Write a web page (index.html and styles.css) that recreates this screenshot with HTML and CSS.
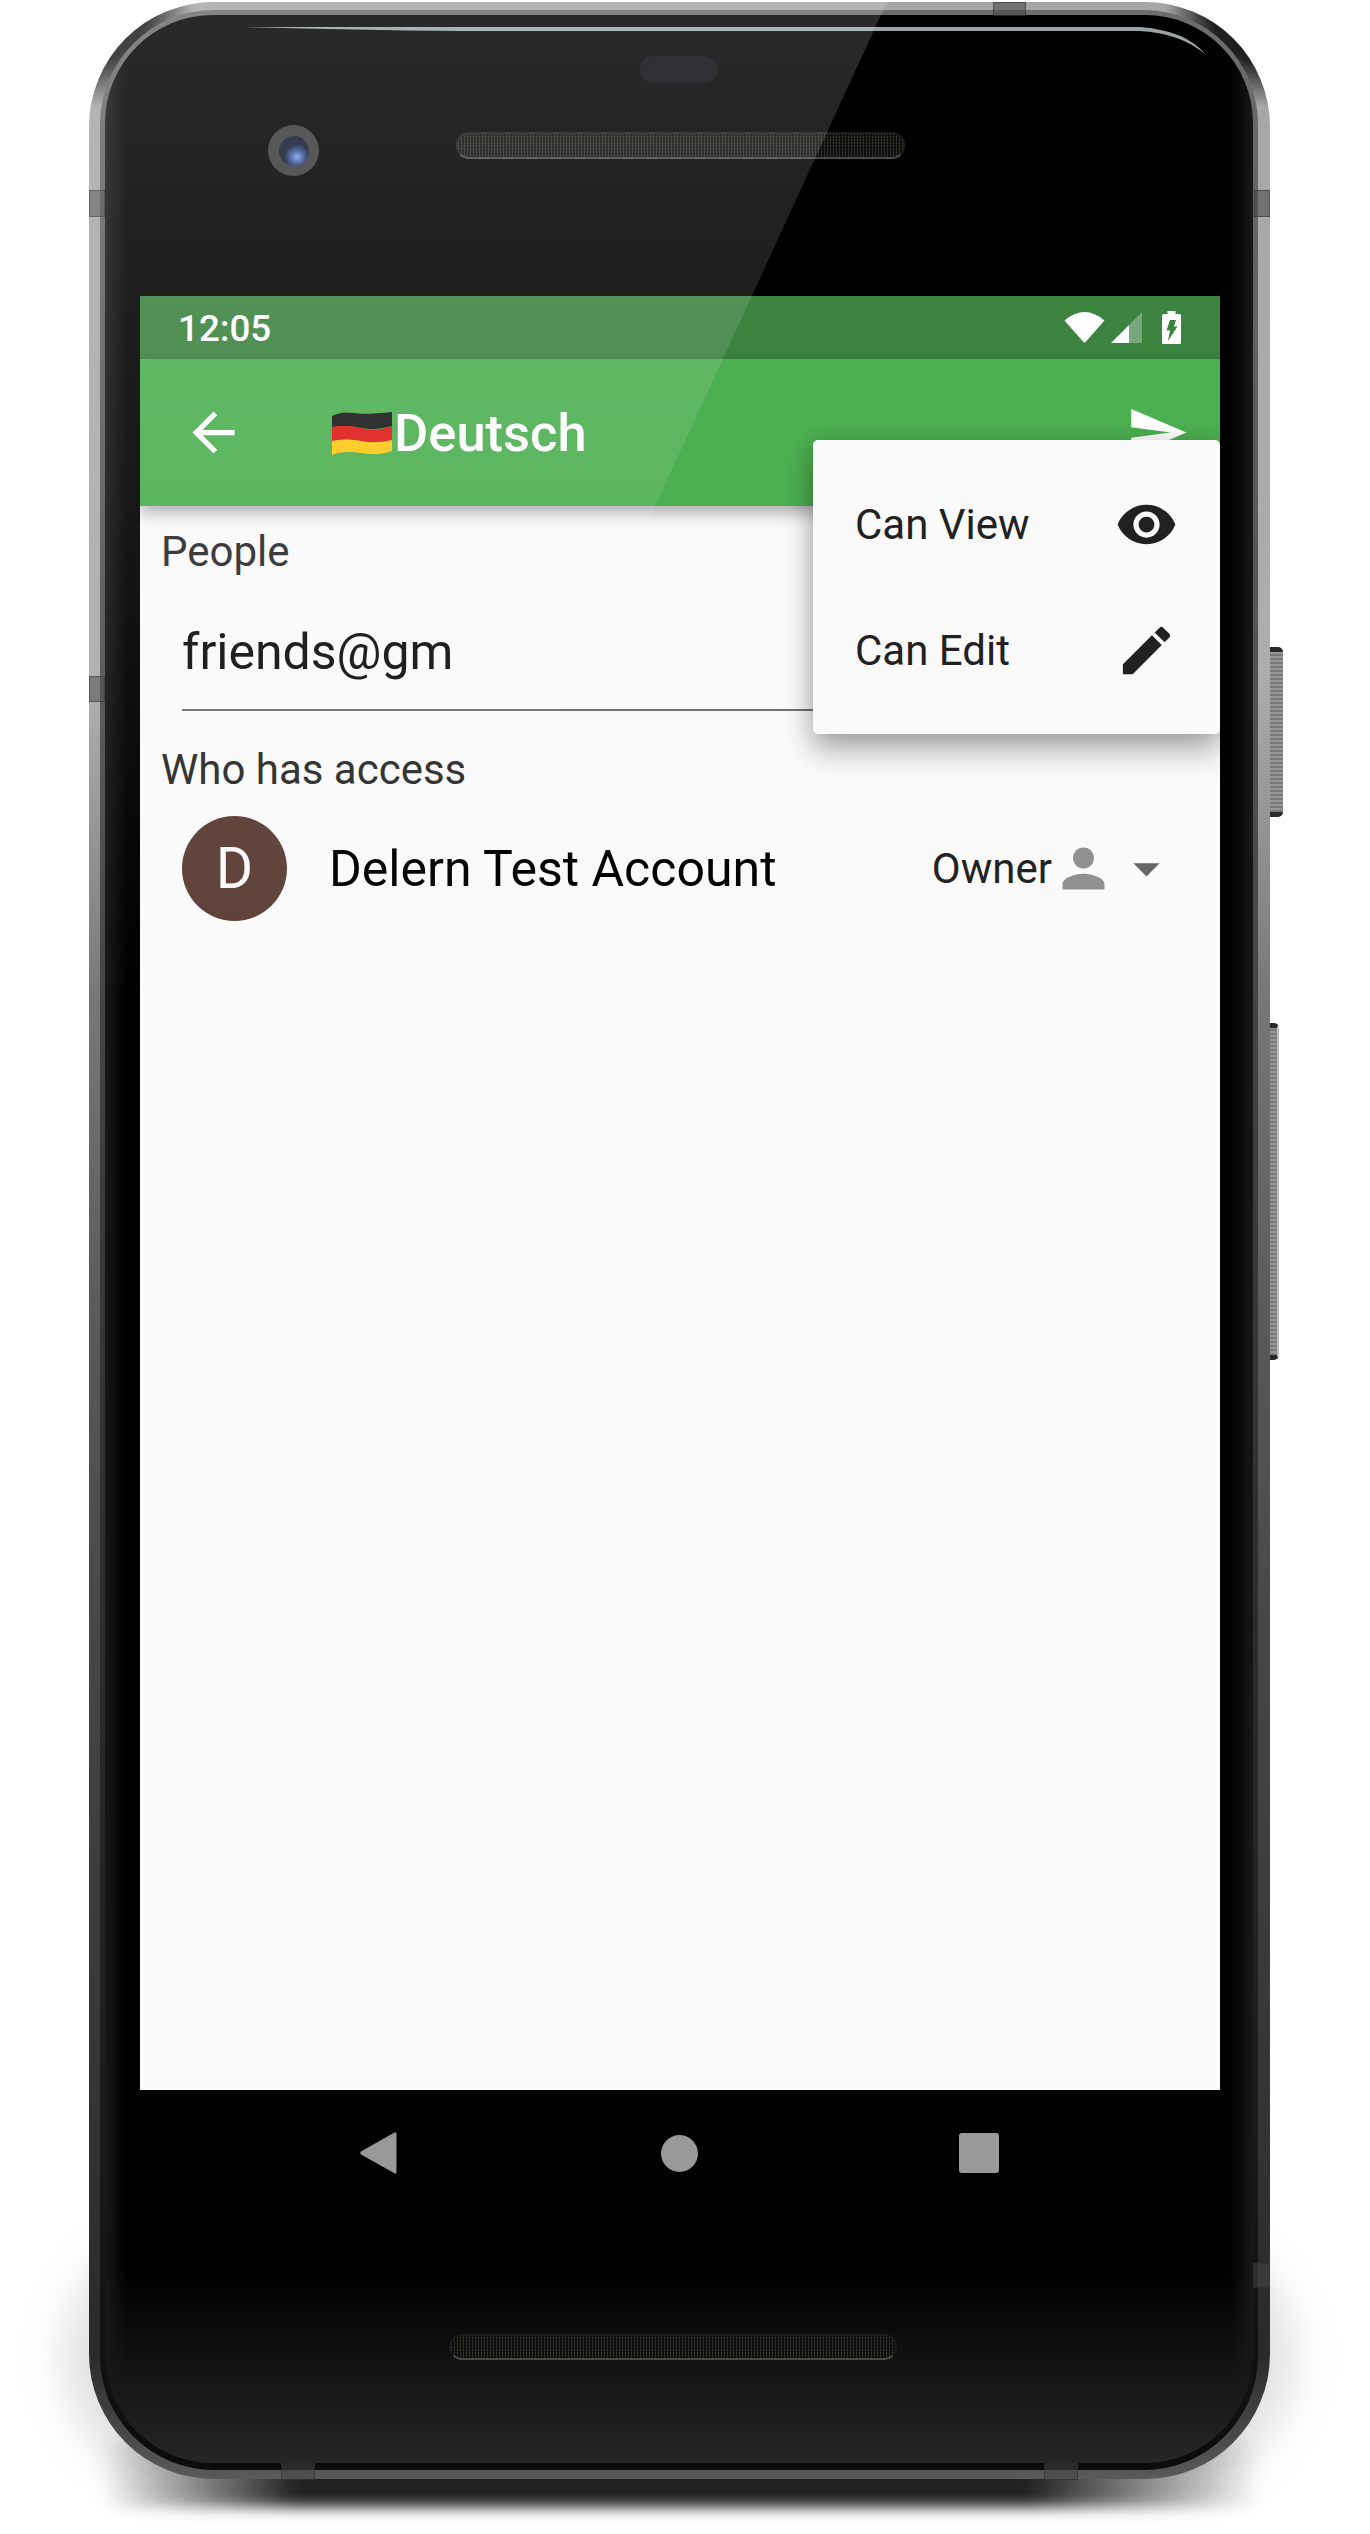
FILE: index.html
```html
<!DOCTYPE html>
<html lang="en">
<head>
    <meta charset="UTF-8">
    <meta name="viewport" content="width=device-width, initial-scale=1.0">
    <title>Deutsch - Share</title>
    <link rel="stylesheet" href="styles.css">
</head>
<body>
    <div class="ground-wide"></div>
    <div class="ground-core"></div>

    <div class="device">
        <div class="phone">
            <div class="rim">
                <div class="bezel">
                    <div class="bezel-top">
                        <div class="sensor"></div>
                        <div class="camera-row">
                            <div class="camera"><div class="lens"></div></div>
                            <div class="speaker speaker-top"></div>
                        </div>
                    </div>

                    <div class="screen">
                        <div class="status-bar">
                            <span class="clock">12:05</span>
                            <div class="status-icons">
                                <svg class="icon-wifi" viewBox="0 0 41 31"><path d="M.5 8.5Q20.5-8.5 40.5 8.5L22 29.5Q20.5 31.5 19 29.5Z" fill="#fff"/></svg>
                                <svg class="icon-signal" viewBox="0 0 31 31">
                                    <path d="M0 31L18 13V31Z" fill="#fff"/>
                                    <path d="M18 13L31 0V31H18Z" fill="#fff" opacity=".3"/>
                                </svg>
                                <svg class="icon-battery" viewBox="0 0 19 33">
                                    <path d="M5.5 0H13.5V3H17.5Q19 3 19 4.5V31.5Q19 33 17.5 33H1.5Q0 33 0 31.5V4.5Q0 3 1.5 3H5.5Z" fill="#fff"/>
                                    <path d="M8 9H14L12 15.5H15.5L6 30L8 19.5H4.5Z" fill="#3b833f"/>
                                </svg>
                            </div>
                        </div>

                        <div class="app-bar">
                            <svg class="icon-lg back-icon" viewBox="0 0 24 24"><path d="M20 11H7.83l5.59-5.59L12 4l-8 8 8 8 1.41-1.41L7.83 13H20v-2z" fill="#fff"/></svg>
                            <svg class="flag" viewBox="0 0 62 44">
                                <path d="M1 5Q10 0 22 2T61 1V15Q45 20 30 17T1 16Z" fill="#1a1a1a"/>
                                <path d="M1 16Q15 13 30 17T61 15V30Q45 33 30 30T1 30Z" fill="#dc1a17"/>
                                <path d="M1 30Q15 27 30 30T61 29V40Q48 45 30 42T1 44Z" fill="#fdc816"/>
                            </svg>
                            <span class="title">Deutsch</span>
                            <svg class="icon-lg send-icon" viewBox="0 0 24 24"><path d="M2.01 21L23 12 2.01 3 2 10l15 2-15 2z" fill="#fff"/></svg>
                        </div>

                        <div class="content">
                            <div class="label label-people">People</div>
                            <div class="people-input">friends@gm</div>
                            <div class="label label-access">Who has access</div>
                            <div class="user-row">
                                <div class="avatar">D</div>
                                <div class="user-name">Delern Test Account</div>
                                <div class="user-role">
                                    <span class="role-text">Owner</span>
                                    <svg class="icon-lg" viewBox="0 0 24 24"><path d="M12 12c2.21 0 4-1.79 4-4s-1.79-4-4-4-4 1.79-4 4 1.79 4 4 4zm0 2c-2.67 0-8 1.34-8 4v2h16v-2c0-2.66-5.33-4-8-4z" fill="#919191"/></svg>
                                    <svg class="icon-lg" viewBox="0 0 24 24"><path d="M7 10l5 5 5-5z" fill="#666"/></svg>
                                </div>
                            </div>
                        </div>

                        <div class="menu">
                            <div class="menu-item">
                                <span>Can View</span>
                                <svg class="icon-lg" viewBox="0 0 24 24"><path d="M12 4.5C7 4.5 2.73 7.61 1 12c1.73 4.39 6 7.5 11 7.5s9.27-3.11 11-7.5c-1.73-4.39-6-7.5-11-7.5zM12 17c-2.76 0-5-2.24-5-5s2.24-5 5-5 5 2.24 5 5-2.24 5-5 5zm0-8c-1.66 0-3 1.34-3 3s1.34 3 3 3 3-1.34 3-3-1.34-3-3-3z" fill="#212121"/></svg>
                            </div>
                            <div class="menu-item">
                                <span>Can Edit</span>
                                <svg class="icon-lg" viewBox="0 0 24 24"><path d="M3 17.25V21h3.75L17.81 9.94l-3.75-3.75L3 17.25zM20.71 7.04c.39-.39.39-1.02 0-1.41l-2.34-2.34c-.39-.39-1.02-.39-1.41 0l-1.83 1.83 3.75 3.75 1.83-1.83z" fill="#212121"/></svg>
                            </div>
                        </div>
                    </div>

                    <div class="nav-bar">
                        <svg class="nav-back" viewBox="0 0 37 42"><path d="M1 19.500L34 .8Q36.500-.5 36.500 2V40Q36.500 42.500 34 41L1 22.500Q-.5 21 1 19.500Z" fill="#999"/></svg>
                        <div class="nav-home"></div>
                        <div class="nav-recent"></div>
                    </div>
                    <div class="speaker speaker-bottom"></div>
                </div>
            </div>

            <!-- seams and glass reflections lie over the body -->
            <div class="seam seam-left"></div>
            <div class="seam seam-left-mid"></div>
            <div class="seam seam-right"></div>
            <div class="seam seam-right-low"></div>
            <div class="seam seam-top"></div>
            <div class="seam seam-bottom-a"></div>
            <div class="seam seam-bottom-b"></div>
            <svg class="glass-line" viewBox="0 0 1181 80"><path d="M158 25H1050Q1097 28 1117 53Q1092 31 1050 29H373Q260 28 158 25Z" fill="#9aa5a6"/></svg>
            <div class="gloss"></div>
        </div>

        <div class="side-keys">
            <div class="key key-power"></div>
            <div class="key key-volume"></div>
        </div>
    </div>
</body>
</html>
```

FILE: styles.css
```css
html, body {
    height: 2534px;
}
body {
    font-family: Roboto, "Liberation Sans", sans-serif;
    margin: 0;
    padding: 2px 0 0 89px;
    box-sizing: border-box;
    background-color: #fff;
    overflow: hidden;
    position: relative;
}

/* shadow the phone throws on the ground */
.ground-wide {
    position: absolute;
    left: 66px;
    top: 2230px;
    width: 1226px;
    height: 255px;
    border-radius: 130px;
    background-color: rgba(0, 0, 0, 0.13);
    filter: blur(24px);
}
.ground-core {
    position: absolute;
    left: 100px;
    top: 2440px;
    width: 1160px;
    height: 67px;
    background: linear-gradient(90deg, rgba(34, 34, 34, 0) 0, #222 17%, #222 80%, rgba(34, 34, 34, 0) 100%);
    filter: blur(7px);
}

.device {
    display: flex;
    position: relative;
    width: 1200px;
}
.phone {
    position: relative;
    width: 1181px;
    height: 2477px;
    flex-shrink: 0;
    box-sizing: border-box;
    padding: 8px 12px 9px 11px;
    border-radius: 125px;
    background:
        radial-gradient(circle 105px at 0 0, #1f1f1f 58%, rgba(30, 30, 30, 0) 100%),
        radial-gradient(circle 105px at 100% 0, #1f1f1f 58%, rgba(30, 30, 30, 0) 100%),
        linear-gradient(180deg, #a6a6a6 0, #adadad 27%, #787878 40%, #5a5a5a 53%, #484848 65%, #383838 81%, #2a2a2a 95%, #5a5a5a 100%);
}
.rim {
    height: 100%;
    box-sizing: border-box;
    padding: 5px 5px 7px 5px;
    border-radius: 114px;
    background: linear-gradient(180deg, #6d6d6d 0, #555 25%, #3a3a3a 50%, #1c1c1c 85%, #0c0c0c 100%);
}
.bezel {
    height: 100%;
    border-radius: 108px;
    overflow: hidden;
    background:
        linear-gradient(90deg, #181818 0, rgba(0, 0, 0, 0) 22px, rgba(0, 0, 0, 0) 1125px, #181818 100%),
        linear-gradient(180deg, #000 0, #000 92.2%, #1c1c1c 98%, #262626 100%);
}

.bezel-top {
    height: 281px;
    box-sizing: border-box;
    padding-top: 41px;
}
.sensor {
    width: 77px;
    height: 27px;
    margin-left: 535px;
    border-radius: 13px;
    background-color: #0a0b10;
}
.camera-row {
    display: flex;
    align-items: flex-start;
    margin-top: 42px;
    padding-left: 163px;
}
.camera {
    display: flex;
    align-items: center;
    justify-content: center;
    width: 51px;
    height: 51px;
    border-radius: 50%;
    background-color: #3c3c3c;
}
.lens {
    width: 30px;
    height: 30px;
    border-radius: 50%;
    background: radial-gradient(circle 15px at 60% 70%, #7fa5ea 0, #3b5aa0 40%, #141b33 85%);
}
.speaker {
    box-sizing: border-box;
    width: 449px;
    height: 27px;
    border: 2px solid #1c1c1c;
    border-bottom-color: #4a4a4a;
    border-radius: 13px;
    background:
        repeating-linear-gradient(0deg, rgba(0, 0, 0, 0.4) 0, rgba(0, 0, 0, 0.4) 1px, rgba(0, 0, 0, 0) 1px, rgba(0, 0, 0, 0) 3px),
        repeating-linear-gradient(90deg, #36362f 0, #36362f 1px, #111110 1px, #111110 3px);
}
.speaker-top {
    margin: 7px 0 0 137px;
}
.speaker-bottom {
    width: 448px;
    height: 26px;
    margin: 0 0 0 344px;
}

.screen {
    position: relative;
    width: 1080px;
    height: 1794px;
    margin-left: 35px;
    overflow: hidden;
    background-color: #fafafa;
}
.status-bar {
    display: flex;
    align-items: center;
    justify-content: space-between;
    height: 63px;
    box-sizing: border-box;
    padding: 0 39px 0 38px;
    background-color: #3b833f;
}
.clock {
    padding-top: 2px;
    color: #fff;
    font-size: 36.75px;
    font-weight: 500;
}
.status-icons {
    display: flex;
    align-items: center;
    gap: 6px;
}
.icon-wifi {
    width: 41px;
    height: 31px;
}
.icon-signal {
    width: 31px;
    height: 31px;
}
.icon-battery {
    width: 19px;
    height: 33px;
    margin-left: 14px;
}

.icon-lg {
    display: block;
    width: 63px;
    height: 63px;
    flex-shrink: 0;
}
.app-bar {
    position: relative;
    display: flex;
    align-items: center;
    height: 147px;
    padding: 0 31.500px 0 42px;
    background-color: #4caf50;
    box-shadow: 0 6px 16px rgba(0, 0, 0, 0.35);
}
.flag {
    width: 62px;
    height: 44px;
    margin-left: 86px;
    flex-shrink: 0;
}
.title {
    margin-left: 1px;
    color: #fff;
    font-size: 52.5px;
    font-weight: 500;
}
.send-icon {
    margin-left: auto;
}

.content {
    padding: 0 21px;
}
.label {
    color: #2c2c2c;
    font-size: 42px;
    line-height: 50px;
}
.label-people {
    padding-top: 21px;
}
.people-input {
    height: 134px;
    box-sizing: border-box;
    width: 880px;
    margin-left: 21px;
    padding-top: 45px;
    border-bottom: 2px solid #707070;
    color: #111;
    font-size: 50px;
    line-height: 60px;
}
.label-access {
    margin-top: 34px;
}
.user-row {
    display: flex;
    align-items: center;
    height: 105px;
    margin-top: 21px;
    padding-left: 21px;
}
.avatar {
    display: flex;
    align-items: center;
    justify-content: center;
    width: 105px;
    height: 105px;
    flex-shrink: 0;
    border-radius: 50%;
    background-color: #5d4037;
    color: #fafafa;
    font-size: 57px;
}
.user-name {
    margin-left: 42px;
    color: #000;
    font-size: 50px;
}
.user-role {
    display: flex;
    align-items: center;
    margin-left: auto;
    margin-right: 21px;
}
.role-text {
    color: #222;
    font-size: 42px;
}

.menu {
    position: absolute;
    top: 144px;
    right: 0;
    width: 407px;
    box-sizing: border-box;
    padding: 21px 0;
    border-radius: 5px;
    background-color: #fafafa;
    box-shadow: 0 16px 30px rgba(0, 0, 0, 0.32), 0 0 20px rgba(0, 0, 0, 0.12);
}
.menu-item {
    display: flex;
    align-items: center;
    justify-content: space-between;
    height: 126px;
    padding: 0 42px;
    color: #212121;
    font-size: 42px;
}

.nav-bar {
    display: flex;
    align-items: center;
    padding: 42px 0 160px 255px;
}
.nav-back {
    width: 37px;
    height: 42px;
}
.nav-home {
    width: 37px;
    height: 37px;
    margin-left: 264px;
    border-radius: 50%;
    background-color: #999;
}
.nav-recent {
    width: 40px;
    height: 40px;
    margin-left: 261px;
    border-radius: 3px;
    background-color: #999;
}

.seam {
    position: absolute;
    background-color: rgba(70, 70, 70, 0.55);
    border: 1px solid rgba(40, 40, 40, 0.5);
    box-sizing: border-box;
}
.seam-left {
    left: 0;
    top: 188px;
    width: 16px;
    height: 27px;
}
.seam-left-mid {
    left: 0;
    top: 674px;
    width: 16px;
    height: 26px;
}
.seam-right {
    right: 0;
    top: 188px;
    width: 16px;
    height: 27px;
}
.seam-right-low {
    right: 0;
    top: 2261px;
    width: 17px;
    height: 25px;
}
.seam-top {
    left: 904px;
    top: 0;
    width: 33px;
    height: 14px;
}
.seam-bottom-a {
    left: 192px;
    bottom: -1px;
    width: 34px;
    height: 17px;
}
.seam-bottom-b {
    left: 955px;
    bottom: -1px;
    width: 34px;
    height: 17px;
}
.glass-line {
    position: absolute;
    left: 0;
    top: 0;
    width: 1181px;
    height: 80px;
}
.gloss {
    position: absolute;
    left: 0;
    top: 0;
    width: 800px;
    height: 1000px;
    border-top-left-radius: 125px;
    background: linear-gradient(180deg, rgba(255, 255, 255, 0.165) 0, rgba(255, 255, 255, 0.118) 30%, rgba(255, 255, 255, 0.09) 50%, rgba(255, 255, 255, 0) 100%);
    clip-path: polygon(0 0, 798px 0, 338px 1000px, 0 1000px);
}

.side-keys {
    display: flex;
    flex-direction: column;
    align-items: flex-start;
}
.key {
    border-radius: 0 5px 5px 0;
    background: repeating-linear-gradient(0deg, #7a7a7a 0, #7a7a7a 2px, #969696 2px, #969696 4px);
    border-top: 5px solid #2a2a2a;
    border-bottom: 5px solid #2a2a2a;
    box-sizing: border-box;
}
.key-power {
    width: 13px;
    height: 170px;
    margin-top: 645px;
}
.key-volume {
    width: 9px;
    height: 337px;
    margin-top: 206px;
    border-right: 2px solid #bdbdbd;
}
```
